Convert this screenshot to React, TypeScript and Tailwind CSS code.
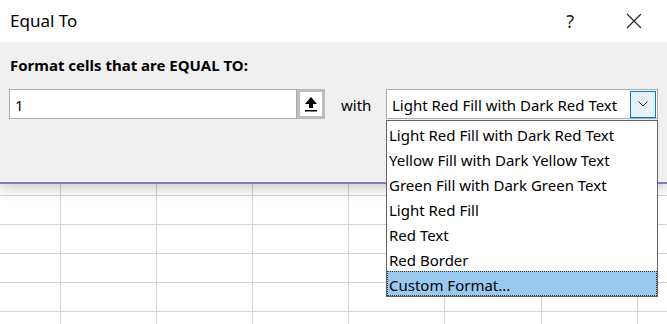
import React from "react";

const font = { fontFamily: '"Noto Sans", "Open Sans", sans-serif' };

const colWidths = [61, 96, 96, 96, 96, 97, 96, 40];
const rowHeights = [12, 29, 29, 29, 29, 20];

const items = [
  "Light Red Fill with Dark Red Text",
  "Yellow Fill with Dark Yellow Text",
  "Green Fill with Dark Green Text",
  "Light Red Fill",
  "Red Text",
  "Red Border",
];

export default function App() {
  return (
    <div
      className="w-[667px] h-[324px] relative overflow-hidden bg-white text-black"
      style={font}
    >
      {/* Dialog */}
      <div className="relative z-10 shadow-[0_4px_14px_rgba(0,0,0,0.22)]">
        <div className="h-[42px] bg-white flex items-center pl-[10px] pr-[22px]">
          <span className="text-[17px] leading-none flex-1 -mt-[1px]">Equal To</span>
          <span className="text-[18px] leading-none mr-[52px] text-[#222]">?</span>
          <svg width="16" height="16" viewBox="0 0 16 16" className="mr-[3px]">
            <path d="M1 1 L15 15 M15 1 L1 15" stroke="#222" strokeWidth="1.1" fill="none" />
          </svg>
        </div>
        <div className="h-[142px] bg-[#f0f0f0] border-b-2 border-[#8a74c0] pl-[9px]">
          <div className="pt-[13px] text-[15px] font-bold leading-[20px] pl-[1px]">
            Format cells that are EQUAL TO:
          </div>
          <div className="flex items-start mt-[14px]">
            <div className="w-[288px] h-[30px] border border-[#acacac] bg-white flex items-center pl-[5px] pt-[2px] text-[15px]">
              1
            </div>
            <div className="w-[28px] h-[30px] border-[3px] border-[#bdbdbd] bg-white flex items-center justify-center">
              <svg width="14" height="16" viewBox="0 0 14 16">
                <path d="M7 1 L13 8 L9 8 L9 12 L5 12 L5 8 L1 8 Z" fill="#000" />
                <rect x="1" y="14" width="12" height="1.5" fill="#000" />
              </svg>
            </div>
            <div className="w-[61px] h-[30px] flex items-center pl-[16px] pt-[2px] text-[15px]">with</div>
            <div className="relative w-[272px] h-[30px] border border-[#adadad] bg-white flex items-center pl-[5px] text-[15px]">
              <span className="flex-1 pt-[2px]">Light Red Fill with Dark Red Text</span>
              <div className="w-[26px] h-[27px] mr-[1px] border border-[#0078d7] bg-[#e5f1fb] flex items-center justify-center">
                <svg width="10" height="6" viewBox="0 0 10 6">
                  <path d="M0.5 0.5 L5 5 L9.5 0.5" stroke="#222" strokeWidth="1" fill="none" />
                </svg>
              </div>
              {/* dropdown list */}
              <div className="absolute left-[-1px] top-[30px] w-[272px] border border-[#646464] bg-white">
                {items.map((t) => (
                  <div key={t} className="h-[25px] flex items-center pl-[2px] pt-[4px] text-[15px] whitespace-nowrap">
                    {t}
                  </div>
                ))}
                <div className="h-[25px] flex items-center pl-[1px] pt-[3px] text-[15px] bg-[#99c9ef] border border-dotted border-[#333]">
                  Custom Format...
                </div>
              </div>
            </div>
          </div>
        </div>
      </div>
      {/* Worksheet grid */}
      <div className="flex flex-col">
        {rowHeights.map((h, r) => (
          <div key={r} className="flex" style={{ height: h }}>
            {colWidths.map((w, c) => (
              <div
                key={c}
                className="border-r border-b border-[#d4d4d4] shrink-0"
                style={{ width: w }}
              />
            ))}
          </div>
        ))}
      </div>
    </div>
  );
}
